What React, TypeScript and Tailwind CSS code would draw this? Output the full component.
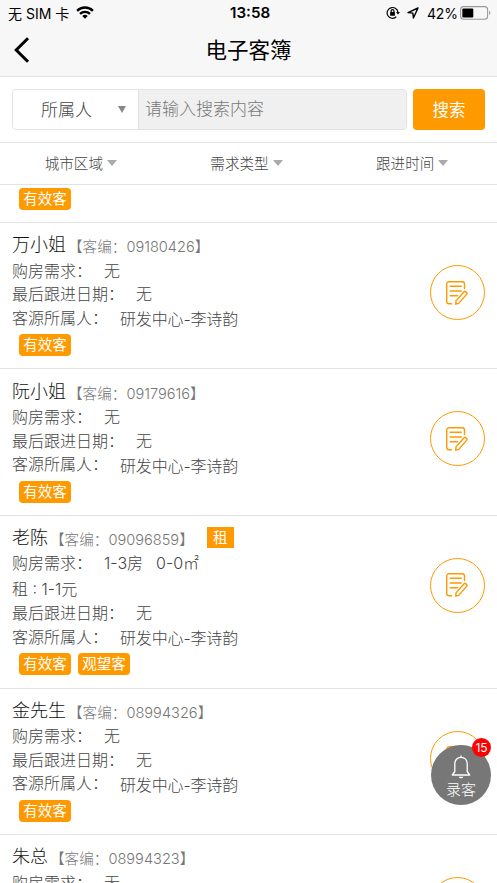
import { useState, FC } from "react";

type Customer = {
  name: string;
  code: string;
  demand: string[];
  rent?: string;
  owner: string;
  tags: string[];
};

const OWNER = "研发中心-李诗韵";

const customers: Customer[] = [
  { name: "万小姐", code: "09180426", demand: ["无"], owner: OWNER, tags: ["有效客"] },
  { name: "阮小姐", code: "09179616", demand: ["无"], owner: OWNER, tags: ["有效客"] },
  {
    name: "老陈",
    code: "09096859",
    demand: ["1-3房", "0-0㎡"],
    rent: "1-1元",
    owner: OWNER,
    tags: ["有效客", "观望客"],
  },
  { name: "金先生", code: "08994326", demand: ["无"], owner: OWNER, tags: ["有效客"] },
  { name: "朱总", code: "08994323", demand: ["无"], owner: OWNER, tags: ["有效客"] },
];

const StatusBar: FC = () => (
  <div className="relative flex h-[26px] items-center justify-between pl-[8px] pr-[6px] text-[14px] font-normal text-black">
    <div className="flex items-center gap-[7px]">
      <span className="whitespace-nowrap">无 SIM 卡</span>
      <svg className="-mt-[2px]" width="18" height="13" viewBox="0 0 17 12" fill="none" stroke="#000" strokeWidth="2.2">
        <path d="M1 4.4a10.6 10.6 0 0 1 15 0" />
        <path d="M3.8 7.3a6.7 6.7 0 0 1 9.4 0" />
        <path d="M5.9 9.3a3.7 3.7 0 0 1 5.2 0L8.5 12z" fill="#000" stroke="none" />
      </svg>
    </div>
    <span className="absolute left-[230px] text-[15.2px] font-semibold">13:58</span>
    <div className="flex items-center">
      <svg className="-mt-[1px]" width="14" height="14" viewBox="0 0 14 14" fill="none" stroke="#000" strokeWidth="1.2">
        <path d="M11.9 6.2A5.4 5.4 0 1 0 10.3 10.8" />
        <path d="M10 6h3.9l-1.9 2.5z" fill="#000" stroke="none" />
        <rect x="4.1" y="6.1" width="4.8" height="3.7" rx="0.5" fill="#000" stroke="none" />
        <path d="M5.1 6.4V5.1a1.4 1.4 0 0 1 2.8 0v1.3" />
      </svg>
      <svg className="ml-[7px]" width="12" height="12" viewBox="0 0 12 12" fill="none" stroke="#000" strokeWidth="1.4" strokeLinejoin="round">
        <path d="M11 1 1 5.6l4.9.5.5 4.9z" />
      </svg>
      <span className="ml-[8px] w-[31px] whitespace-nowrap text-[14px] tracking-[-0.2px]">42%</span>
      <svg className="-mt-[1px] ml-[2px]" width="31" height="14" viewBox="0 0 31 14" fill="none">
        <rect x="0.6" y="0.6" width="27" height="12.6" rx="3" stroke="#999" strokeWidth="1.1" />
        <rect x="2.3" y="2.4" width="11" height="9" rx="1" fill="#000" />
        <path d="M29.2 4.8c1.6.6 1.6 3.6 0 4.2z" fill="#999" />
      </svg>
    </div>
  </div>
);

const Header: FC = () => (
  <header className="h-[77px] border-b border-[#e0e0e0] bg-[#f7f7f7]">
    <StatusBar />
    <div className="relative flex h-[48px] items-center justify-center">
      <button className="absolute left-[13px] top-[10px]">
        <svg width="18" height="28" viewBox="0 0 18 28" fill="none" stroke="#000" strokeWidth="3">
          <path d="M15 2.2 3.2 14 15 25.8" />
        </svg>
      </button>
      <h1 className="text-[21.5px] font-normal text-black">电子客簿</h1>
    </div>
  </header>
);

const SearchBar: FC = () => {
  const [keyword, setKeyword] = useState("");
  return (
    <div className="flex h-[65px] items-start px-[12px] pt-[12px]">
      <div className="flex h-[41px] w-[395px] overflow-hidden rounded-[4px] border border-[#e3e3e3] bg-[#f0f0f0]">
        <button className="flex w-[126px] shrink-0 items-center border-r border-[#e3e3e3] bg-white pl-[28px] pt-[2px] text-[17px] text-[#444]">
          所属人
          <svg className="-mt-[3px] ml-[26px]" width="8" height="7" viewBox="0 0 8 7">
            <path d="M0 0h8L4 7z" fill="#888" />
          </svg>
        </button>
        <input
          value={keyword}
          onChange={(e) => setKeyword(e.target.value)}
          placeholder="请输入搜索内容"
          className="w-full bg-[#f0f0f0] px-[6px] pt-[1px] text-[17px] outline-none placeholder:text-[#777]"
        />
      </div>
      <button className="ml-[6px] h-[41px] w-[72px] rounded-[4px] bg-[#ff9900] pt-[1px] text-[16.5px] font-normal text-white">
        搜索
      </button>
    </div>
  );
};

const Filters: FC = () => (
  <div className="grid h-[43px] grid-cols-3 border-y border-[#e3e3e3]">
    {["城市区域", "需求类型", "跟进时间"].map((label) => (
      <button key={label} className="flex items-center justify-center gap-[4px] pr-[4px] pt-[2px] text-[14.6px] text-[#444]">
        {label}
        <svg className="-mt-[3px]" width="10" height="6" viewBox="0 0 10 6">
          <path d="M0 0h10L5 6z" fill="#aaa" />
        </svg>
      </button>
    ))}
  </div>
);

const Tag: FC<{ label: string }> = ({ label }) => (
  <span className="flex h-[22px] w-[52px] items-center justify-center rounded-[4px] bg-[#ff9900] text-[14.5px] font-normal text-white">
    {label}
  </span>
);

const EditIcon: FC = () => (
  <svg className="-ml-[2px]" width="24" height="26" viewBox="0 0 24 26" fill="none" stroke="#ff9900" strokeWidth="1.4" strokeLinecap="round" strokeLinejoin="round">
    <path d="M6.6 23.8H4a2.3 2.3 0 0 1-2.3-2.3V4A2.3 2.3 0 0 1 4 1.7h13.2A2.3 2.3 0 0 1 19.5 4v4.6" />
    <path d="M5.2 6.2h11M5.2 11h11M5.2 15.7h7.5" />
    <path d="m11 20.9 8.1-9.2a1 1 0 0 1 1.4-.1l1.2 1a1 1 0 0 1 .1 1.5l-8.1 9.3-2.9.8z" />
  </svg>
);

const Record: FC<{ customer: Customer }> = ({ customer }) => (
  <li
    className={
      customer.rent
        ? "flex h-[172.8px] shrink-0 justify-between border-b border-[#e3e3e3] px-[12px]"
        : "flex h-[146.4px] shrink-0 justify-between border-b border-[#e3e3e3] px-[12px]"
    }
  >
    <div className="whitespace-nowrap text-[16px] text-[#444]">
      <div className="flex h-[35.7px] items-center pt-[8px]">
        <span className="text-[18px] text-[#111]">{customer.name}</span>
        <span className="pl-[2px] pt-[7px] text-[14.6px] text-[#777]">【客编：{customer.code}】</span>
        {customer.rent && (
          <span className="ml-[13px] flex h-[21px] w-[27px] items-center justify-center bg-[#ff9900] text-[14.5px] font-normal text-white">
            租
          </span>
        )}
      </div>
      <div className="flex h-[23.7px] items-center">
        购房需求：
        <span className="ml-[12px] flex gap-[13px]">
          {customer.demand.map((d) => (
            <span key={d}>{d}</span>
          ))}
        </span>
      </div>
      {customer.rent && <div className="flex h-[26.2px] items-center pt-[2px]">租 : {customer.rent}</div>}
      <div className="flex h-[23.7px] items-center">
        最后跟进日期：<span className="ml-[12px]">无</span>
      </div>
      <div className="flex h-[23.7px] items-center">
        客源所属人：<span className="ml-[12px] pt-[3px] tracking-[-0.15px]">{customer.owner}</span>
      </div>
      <div className="flex gap-[7px] pl-[7px] pt-[4.5px]">
        {customer.tags.map((t) => (
          <Tag key={t} label={t} />
        ))}
      </div>
    </div>
    <button className="mt-[42px] flex h-[55px] w-[55px] items-center justify-center rounded-full border border-[#ff9900]">
      <EditIcon />
    </button>
  </li>
);

const RecordButton: FC = () => (
  <button className="absolute left-[431px] top-[745px] flex h-[60px] w-[60px] flex-col items-center rounded-full bg-[#777] pt-[10px] text-white">
    <svg width="20" height="24" viewBox="0 0 20 24" fill="none" stroke="#fff" strokeWidth="1.3" strokeLinejoin="round">
      <path d="M10 2.3C6 2.3 3.8 5.2 3.8 9v7.5L1.3 20h17.4l-2.5-3.5V9c0-3.8-2.2-6.7-6.2-6.7z" />
      <path d="M10 .6v1.7" />
      <path d="M7.8 21.8h4.4c-.3 2-4.1 2-4.4 0z" fill="#fff" stroke="none" />
    </svg>
    <span className="text-[15px] leading-[21px]">录客</span>
    <span className="absolute right-0 -top-[7px] flex h-[19px] w-[19px] items-center justify-center rounded-full bg-[#ff0000] text-[12px] font-normal">
      15
    </span>
  </button>
);

export default function App() {
  return (
    <div className="relative flex h-[883px] w-[497px] flex-col overflow-hidden bg-white font-[Inter,'Noto_Sans_CJK_SC',sans-serif] font-light">
      <Header />
      <SearchBar />
      <Filters />
      <ul className="flex min-h-0 flex-1 flex-col overflow-hidden">
        <li className="h-[38px] shrink-0 border-b border-[#e3e3e3] pl-[19px] pt-[3px]">
          <Tag label="有效客" />
        </li>
        {customers.map((c) => (
          <Record key={c.code} customer={c} />
        ))}
      </ul>
      <RecordButton />
    </div>
  );
}
